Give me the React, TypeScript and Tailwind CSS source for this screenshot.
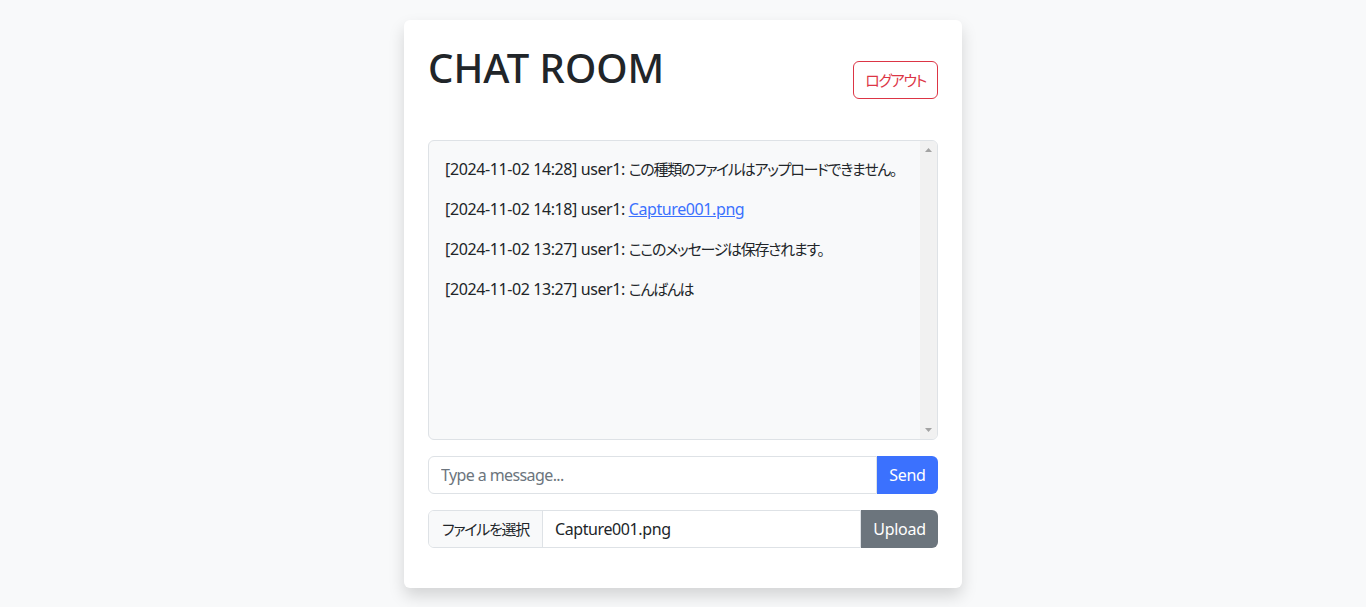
import React from 'react';

const messages = [
    { id: '1', time: '2024-11-02 14:28', user: 'user1', text: 'この種類のファイルはアップロードできません。' },
    { id: '2', time: '2024-11-02 14:18', user: 'user1', file: 'Capture001.png' },
    { id: '3', time: '2024-11-02 13:27', user: 'user1', text: 'ここのメッセージは保存されます。' },
    { id: '4', time: '2024-11-02 13:27', user: 'user1', text: 'こんばんは' },
];

const font = { fontFamily: '"Noto Sans", "Noto Sans CJK JP", sans-serif' };

// proportional kana, closer to the Japanese face in the screenshot
const Jp = ({ children }: { children: React.ReactNode }) => (
    <span className="text-[15px] tracking-[-1.3px] [font-feature-settings:'palt']">{children}</span>
);

const App = () => {
    return (
        <div className="min-h-[607px] w-full bg-[#f8f9fa] pt-5 text-[#212529]" style={font}>
            <div className="mx-auto w-[558px] rounded-md bg-white p-6 shadow-[0_8px_16px_rgba(0,0,0,0.15)]">
                <div className="mb-[41px] flex items-start justify-between">
                    <h1 className="text-[40px] font-medium leading-[48px]">CHAT ROOM</h1>
                    <button className="mt-[17px] h-[38px] w-[85px] rounded-md border border-[#dc3545] text-[16px] text-[#dc3545]">
                        <Jp>ログアウト</Jp>
                    </button>
                </div>

                <div className="mb-4 flex h-[300px] overflow-hidden rounded-md border border-[#dee2e6] bg-[#f8f9fa] text-[16px] leading-6 tracking-[-0.4px]">
                    <div className="min-w-0 flex-1 overflow-hidden p-4">
                        {messages.map((m) => (
                            <p key={m.id} className="mb-4 whitespace-nowrap">
                                [{m.time}] {m.user}:{' '}
                                {m.file ? (
                                    <a href="#" className="text-[#3b71fe] underline">
                                        {m.file}
                                    </a>
                                ) : (
                                    <Jp>{m.text}</Jp>
                                )}
                            </p>
                        ))}
                    </div>
                    <div className="flex w-[17px] shrink-0 flex-col items-center justify-between bg-[#f1f1f1] py-[7px]">
                        <svg width="7" height="4" viewBox="0 0 7 4">
                            <path d="M3.5 0L7 4H0z" fill="#a3a3a3" />
                        </svg>
                        <svg width="7" height="4" viewBox="0 0 7 4">
                            <path d="M0 0h7L3.5 4z" fill="#a3a3a3" />
                        </svg>
                    </div>
                </div>

                <div className="mb-4 flex h-[38px]">
                    <input
                        className="min-w-0 flex-1 rounded-l-md border border-[#dee2e6] px-3 text-[16px] tracking-[-0.6px] outline-none placeholder:text-[#6c757d]"
                        placeholder="Type a message..."
                    />
                    <button className="w-[61px] rounded-r-md bg-[#3b71fe] text-[16px] tracking-[-0.3px] text-white">Send</button>
                </div>

                <div className="mb-4 flex h-[38px]">
                    <div className="flex flex-1 items-center overflow-hidden rounded-l-md border border-[#dee2e6] text-[16px]">
                        <span className="flex h-full w-[114px] shrink-0 items-center justify-center border-r border-[#dee2e6] bg-[#f8f9fa]">
                            <Jp>ファイルを選択</Jp>
                        </span>
                        <span className="px-3 tracking-[-0.4px]">Capture001.png</span>
                    </div>
                    <button className="w-[77px] rounded-r-md bg-[#6c757d] text-[16px] tracking-[-0.3px] text-white">Upload</button>
                </div>
            </div>
        </div>
    );
};

export default App;
